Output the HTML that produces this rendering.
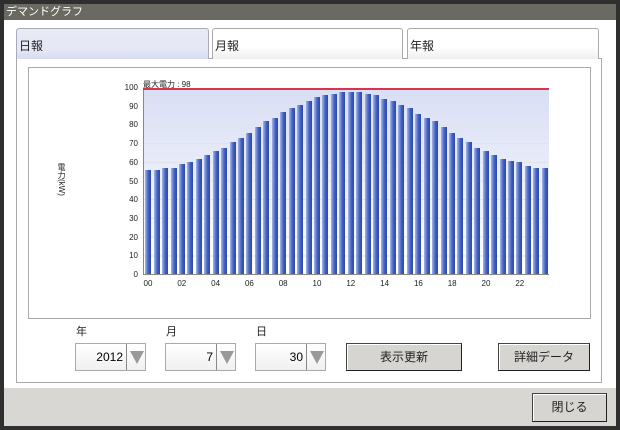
<!DOCTYPE html>
<html><head><meta charset="utf-8"><style>
*{margin:0;padding:0;box-sizing:border-box}
body{width:620px;height:430px;background:#2f2f2f;font-family:"Liberation Sans","Noto Sans CJK JP",sans-serif;position:relative;overflow:hidden}
.a{position:absolute}
.title{left:4px;top:4px;width:612px;height:16px;background:#6a6a62;color:#fff;font-size:11px;line-height:16px;padding-left:2px}
.body{left:4px;top:20px;width:612px;height:368px;background:#fff}
.foot{left:4px;top:388px;width:612px;height:38px;background:#d9d7d3}
.tab{height:31px;border:1px solid #aaa;border-bottom:none;border-radius:3px 3px 0 0;background:linear-gradient(#fff,#fff 60%,#eee);font-size:12px;line-height:34px;padding-left:2px;color:#222}
.panel{left:16px;top:58px;width:586px;height:325px;border:1px solid #aaa;background:#fff}
.chart{left:28px;top:67px;width:563px;height:252px;border:1px solid #aaa}
.plot{left:143px;top:88px;width:406px;height:187px;background:repeating-linear-gradient(to top,transparent 0,transparent 17.7px,#e2e2ea 17.7px,#e2e2ea 18.7px),linear-gradient(#d8def4,#fff);border-left:1px solid #888;border-bottom:1px solid #888;display:flex;align-items:flex-end}
.plot div{flex:1;display:flex;justify-content:center;align-items:flex-end;height:100%}
.plot span{width:6px;background:linear-gradient(90deg,#a5b6e8,#4262c2 55%,#2a48a8)}
.yl{font-size:8px;color:#222;width:30px;text-align:right}
.xl{font-size:8px;color:#222;width:20px;text-align:center;top:279px}
.lbl{font-size:11px;color:#222;top:323px}
.sel{top:343px;width:71px;height:28px;border:1px solid #aaa;background:linear-gradient(#fff,#f0f0f0);font-size:12px;line-height:26px}
.sel b{position:absolute;right:0;top:0;width:19px;height:26px;border-left:1px solid #888;font-weight:normal}
.sel b:after{content:"";position:absolute;left:3px;top:7px;border-left:7px solid transparent;border-right:7px solid transparent;border-top:13px solid #999}
.sel i{position:absolute;right:22px;font-style:normal}
.btn{background:#d6d5d2;border:1px solid #444;border-right-color:#222;border-bottom-color:#222;box-shadow:inset 1px 1px #fff;font-size:12px;text-align:center;color:#222}
</style></head><body>
<div class="a title">デマンドグラフ</div>
<div class="a body"></div>
<div class="a foot"></div>
<div class="a panel"></div>
<div class="a tab" style="left:16px;top:28px;width:193px;background:linear-gradient(#e8eaf5,#e4e7f5 70%,#d7dbef);border-color:#aab">日報</div>
<div class="a tab" style="left:212px;top:28px;width:191px">月報</div>
<div class="a tab" style="left:407px;top:28px;width:192px">年報</div>
<div class="a chart"></div>
<div class="a" style="left:143px;top:79px;font-size:8px;color:#222">最大電力 : 98</div>
<div class="a" style="left:56px;top:163px;font-size:8px;color:#222;writing-mode:vertical-rl">電力(kW)</div>
<div class="a plot" id="p"></div>
<div class="a" style="left:143px;top:88px;width:406px;height:2px;background:#d8344a"></div>
<div id="g"></div>
<div class="a lbl" style="left:76px">年</div>
<div class="a lbl" style="left:166px">月</div>
<div class="a lbl" style="left:256px">日</div>
<div class="a sel" style="left:75px"><i>2012</i><b></b></div>
<div class="a sel" style="left:165px"><i>7</i><b></b></div>
<div class="a sel" style="left:255px"><i>30</i><b></b></div>
<div class="a btn" style="left:346px;top:343px;width:116px;height:28px;line-height:26px">表示更新</div>
<div class="a btn" style="left:498px;top:343px;width:92px;height:28px;line-height:26px">詳細データ</div>
<div class="a btn" style="left:532px;top:393px;width:75px;height:29px;line-height:27px">閉じる</div>
<script>
var v=[56,56,57,57,59,60,62,64,66,68,71,73,76,79,82,84,87,89,91,93,95,96,97,98,98,98,97,96,94,93,91,89,86,84,82,79,76,73,71,68,66,64,62,61,60,58,57,57];
var p=document.getElementById('p'),h='';
for(var i=0;i<v.length;i++)h+='<div><span style="height:'+v[i]+'%"></span></div>';
p.innerHTML=h;
var g='';
for(var k=0;k<=10;k++){var y=275-k*18.7;
g+='<div class="a yl" style="left:108px;top:'+(y-5)+'px">'+(k*10)+'</div>';}
for(var j=0;j<12;j++){var s=(j*2<10?'0':'')+(j*2);g+='<div class="a xl" style="left:'+(138+j*33.8)+'px">'+s+'</div>';}
document.getElementById('g').innerHTML=g;
</script>
</body></html>
